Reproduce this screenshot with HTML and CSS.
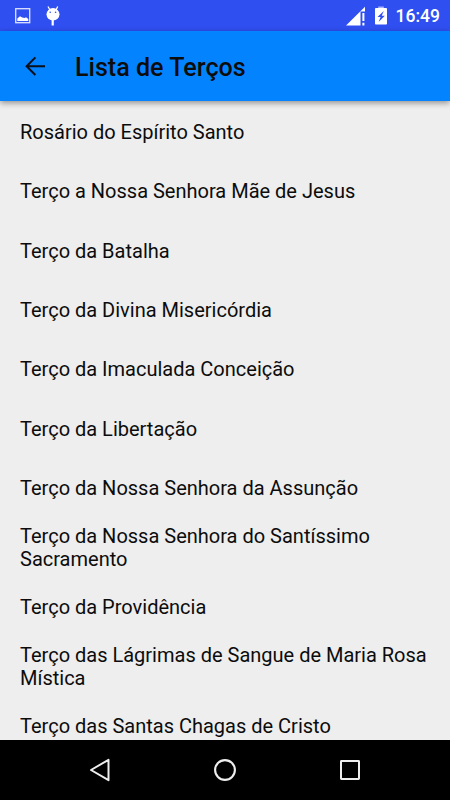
FILE: index.html
```html
<!DOCTYPE html>
<html lang="pt-BR">
<head>
  <meta charset="UTF-8">
  <meta name="viewport" content="width=device-width, initial-scale=1.0">
  <title>Lista de Terços</title>
  <link rel="stylesheet" href="styles.css">
</head>
<body>
  <!-- Barra de status -->
  <div class="status-bar">
    <svg class="icon-image" width="16" height="16" viewBox="0 0 16 16">
      <rect x="0.7" y="0.7" width="14" height="14" fill="none" stroke="#dfe3ff" stroke-width="1.3"/>
      <path d="M2.3 13V10.5L5 8.2L7.2 9.6L9.5 10L11 9.3L13.3 11V13Z" fill="#fff"/>
    </svg>
    <svg class="icon-debug" width="14" height="20" viewBox="0 0 14 20">
      <path d="M2 0.5L4 4M11.7 0.5L10 4" stroke="#fff" stroke-width="1.3"/>
      <ellipse cx="7" cy="8.3" rx="6.5" ry="6.2" fill="#fff"/>
      <circle cx="4.2" cy="6.3" r="0.8" fill="#304ff0"/>
      <circle cx="9.6" cy="6.3" r="0.8" fill="#304ff0"/>
      <path d="M6.7 14V19.5" stroke="#fff" stroke-width="2.2"/>
    </svg>
    <div class="status-right">
      <svg width="20" height="20" viewBox="0 0 20 20">
        <path d="M0 19.5L19 0.8V5.5H14.5V19.5Z" fill="#fff"/>
        <path d="M17.4 7V15M17.4 16.7V19.5" stroke="#fff" stroke-width="2"/>
      </svg>
      <svg class="icon-battery" width="12" height="19" viewBox="0 0 12 19">
        <path d="M3.2 0.5H8.8V2H3.2Z" fill="#aab6ff"/>
        <rect x="0" y="2" width="12" height="16.5" rx="0.8" fill="#fff"/>
        <path d="M8.8 5L2.5 11H5.6L3.6 16L9.8 9.7H6.7Z" fill="#304ff0"/>
      </svg>
      <span class="clock">16:49</span>
    </div>
  </div>

  <header class="toolbar">
    <svg width="20" height="20" viewBox="0 0 20 20">
      <path d="M20 10.2H1.6M10.4 1.4L1.6 10.2L10.4 19" fill="none" stroke="#0a0f18" stroke-width="2"/>
    </svg>
    <h1>Lista de Terços</h1>
  </header>

  <ul class="list">
    <li>Rosário do Espírito Santo</li>
    <li>Terço a Nossa Senhora Mãe de Jesus</li>
    <li>Terço da Batalha</li>
    <li>Terço da Divina Misericórdia</li>
    <li>Terço da Imaculada Conceição</li>
    <li>Terço da Libertação</li>
    <li>Terço da Nossa Senhora da Assunção</li>
    <li>Terço da Nossa Senhora do Santíssimo Sacramento</li>
    <li>Terço da Providência</li>
    <li>Terço das Lágrimas de Sangue de Maria Rosa Mística</li>
    <li>Terço das Santas Chagas de Cristo</li>
  </ul>

  <!-- Botões de navegação -->
  <nav class="nav-bar">
    <svg width="24" height="24" viewBox="0 0 24 24">
      <path d="M20.5 1.8V22.2L3 12Z" fill="none" stroke="#eee" stroke-width="2" stroke-linejoin="round"/>
    </svg>
    <svg width="24" height="24" viewBox="0 0 24 24">
      <circle cx="12" cy="12" r="9.9" fill="none" stroke="#eee" stroke-width="2.1"/>
    </svg>
    <svg width="24" height="24" viewBox="0 0 24 24">
      <rect x="3" y="3" width="18" height="18" rx="0.4" fill="none" stroke="#eee" stroke-width="2" stroke-linejoin="round"/>
    </svg>
  </nav>
</body>
</html>
```

FILE: styles.css
```css
body {
  margin: 0;
  font-family: Roboto, sans-serif;
  background-color: #eee;
  color: #0c0c0c;
  height: 100vh;
  display: flex;
  flex-direction: column;
  overflow: hidden;
}

svg {
  display: block;
  flex-shrink: 0;
}

.status-bar {
  height: 31px;
  flex-shrink: 0;
  box-sizing: border-box;
  padding: 0 10px 0 15px;
  display: flex;
  align-items: center;
  background-color: #304ff0;
  color: white;
}

.icon-debug {
  margin-left: 15px;
}

.status-right {
  margin-left: auto;
  display: flex;
  align-items: center;
}

.icon-battery {
  margin-left: 9px;
}

.clock {
  margin-left: 9px;
  padding-top: 2px;
  font-size: 17.5px;
  font-weight: 500;
  line-height: 29px;
}

.toolbar {
  height: 70px;
  flex-shrink: 0;
  box-sizing: border-box;
  padding-left: 25px;
  display: flex;
  align-items: center;
  gap: 30px;
  background-color: #0483ff;
  box-shadow: 0 2px 6px rgba(0, 0, 0, 0.4);
  z-index: 1;
}

.toolbar h1 {
  margin: 4px 0 0;
  font-size: 25.1px;
  font-weight: 500;
  line-height: 30px;
}

.list {
  flex: 1;
  min-height: 0;
  margin: 0;
  padding: 2px 20px 0;
  overflow: hidden;
  list-style: none;
}

.list li {
  height: 59.4px;
  display: flex;
  align-items: center;
  font-size: 20px;
  line-height: 23.6px;
}

.nav-bar {
  height: 60px;
  flex-shrink: 0;
  display: flex;
  justify-content: center;
  align-items: center;
  gap: 101px;
  background-color: #000;
}
```
